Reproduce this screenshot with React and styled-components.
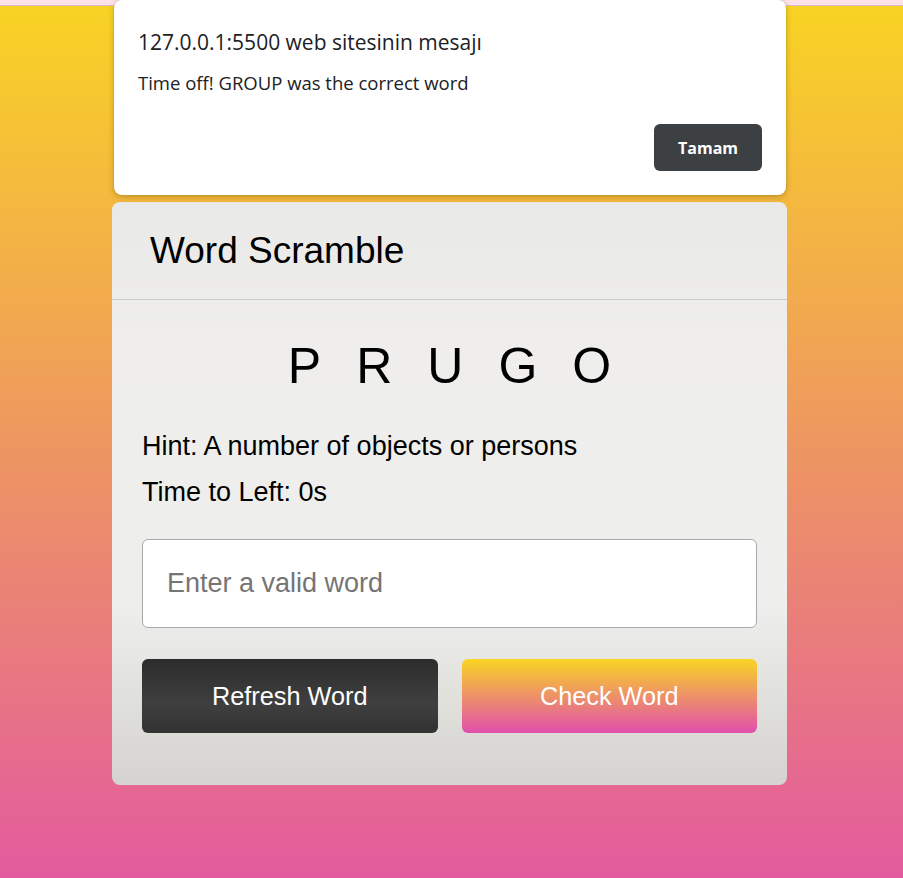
import React from "react";
import styled, { createGlobalStyle } from "styled-components";

const GlobalStyle = createGlobalStyle`
  html, body {
    margin: 0;
    padding: 0;
  }
  body {
    min-height: 878px;
    font-family: "Liberation Sans", Arial, sans-serif;
    background: linear-gradient(to bottom, #f9d423 0px, #e35b9e 878px);
    background-repeat: no-repeat;
  }
`;

const Page = styled.div`
  position: relative;
  min-height: 878px;
  display: flex;
  flex-direction: column;
  align-items: center;
`;

const TopStrip = styled.div`
  align-self: stretch;
  height: 5px;
  background: #fde2e8;
  border-bottom: 1px solid #dcb9c9;
`;

const Alert = styled.div`
  position: absolute;
  top: 0;
  left: 114px;
  width: 672px;
  height: 195px;
  box-sizing: border-box;
  padding: 29px 24px 24px;
  background: #fff;
  border-radius: 8px;
  box-shadow: 0 2px 6px rgba(110, 80, 0, 0.35), 0 0 2px rgba(0, 0, 0, 0.15);
  display: flex;
  flex-direction: column;
  font-family: "Open Sans", "Noto Sans", sans-serif;
  color: #202124;
  z-index: 2;
`;

const AlertTitle = styled.div`
  font-size: 21px;
  line-height: 26px;
`;

const AlertText = styled.div`
  margin-top: 17px;
  font-size: 18.5px;
  line-height: 22px;
`;

const AlertActions = styled.div`
  margin-top: auto;
  display: flex;
  justify-content: flex-end;
`;

const AlertButton = styled.button`
  width: 108px;
  height: 47px;
  border: none;
  border-radius: 6px;
  background: #3c4043;
  color: #fff;
  font-family: "Open Sans", "Noto Sans", sans-serif;
  font-weight: 700;
  font-size: 16px;
`;

const Card = styled.div`
  margin-top: 196px;
  margin-left: -4px;
  width: 675px;
  height: 583px;
  box-sizing: border-box;
  border-radius: 8px;
  background: linear-gradient(
    to top,
    #d5d4d0 0%,
    #d5d4d0 1%,
    #eeeeec 31%,
    #efeeec 75%,
    #e9e9e7 100%
  );
  display: flex;
  flex-direction: column;
`;

const Header = styled.header`
  padding: 30px 38px 30px;
  border-bottom: 1px solid #cbcbc9;
`;

const Title = styled.h1`
  margin: 0;
  font-size: 37px;
  line-height: 37px;
  font-weight: 400;
  color: #000;
`;

const Body = styled.section`
  padding: 0 30px;
  display: flex;
  flex-direction: column;
`;

const Letters = styled.p`
  margin: 41px -35px 0 0;
  text-align: center;
  font-size: 50px;
  line-height: 50px;
  letter-spacing: 35px;
  color: #000;
`;

const Detail = styled.p`
  margin: ${(p) => p.$gap}px 0 0;
  font-size: 27px;
  line-height: 27px;
  color: #000;
`;

const Input = styled.input`
  margin-top: 33px;
  height: 89px;
  box-sizing: border-box;
  padding: 0 24px;
  border: 1px solid #a9a9a9;
  border-radius: 6px;
  background: #fff;
  font-family: "Liberation Sans", Arial, sans-serif;
  font-size: 27px;
  outline: none;
  &::placeholder {
    color: #757575;
  }
`;

const Buttons = styled.div`
  margin-top: 31px;
  display: grid;
  grid-template-columns: 1fr 1fr;
  gap: 24px;
`;

const Button = styled.button`
  height: 74px;
  border: none;
  border-radius: 6px;
  color: #fff;
  font-family: "Liberation Sans", Arial, sans-serif;
  font-size: 25.3px;
  background: ${(p) =>
    p.$primary
      ? "linear-gradient(to bottom, #f9d423, #e14fad)"
      : "linear-gradient(to top, #323232 0%, #3f3f3f 40%, #1c1c1c 150%)"};
`;

export default function App() {
  return (
    <>
      <GlobalStyle />
      <Page>
        <TopStrip />
        <Alert>
          <AlertTitle>127.0.0.1:5500 web sitesinin mesajı</AlertTitle>
          <AlertText>Time off! GROUP was the correct word</AlertText>
          <AlertActions>
            <AlertButton>Tamam</AlertButton>
          </AlertActions>
        </Alert>
        <Card>
          <Header>
            <Title>Word Scramble</Title>
          </Header>
          <Body>
            <Letters>PRUGO</Letters>
            <Detail $gap={42}>Hint: A number of objects or persons</Detail>
            <Detail $gap={19}>Time to Left: 0s</Detail>
            <Input placeholder="Enter a valid word" />
            <Buttons>
              <Button>Refresh Word</Button>
              <Button $primary>Check Word</Button>
            </Buttons>
          </Body>
        </Card>
      </Page>
    </>
  );
}
